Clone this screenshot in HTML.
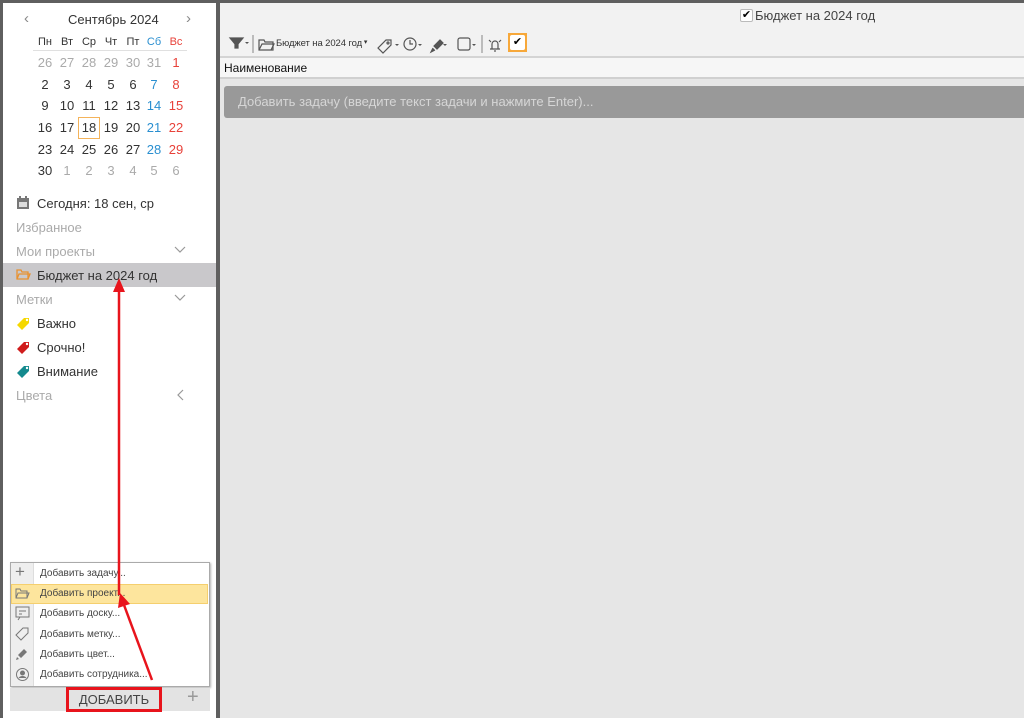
<!DOCTYPE html>
<html><head><meta charset="utf-8"><style>
*{margin:0;padding:0;box-sizing:border-box}
body{width:1024px;height:718px;background:#5f5f5f;font-family:"Liberation Sans","Noto Sans CJK SC",sans-serif;position:relative;overflow:hidden;color:#333}
.abs{position:absolute}
#left{left:3px;top:3px;width:213px;height:715px;background:#fff}
#right{left:220px;top:3px;width:804px;height:715px;background:#e6e6e6}
.cal span{position:absolute;width:22px;text-align:center;font-size:13px;transform:translate(-11px,-8px)}
.g{color:#aaa}.b{color:#2a8fd0}.r{color:#e8423a}
.side{position:absolute;left:16px;font-size:13px}
.muted{color:#aaa}
.mi{position:absolute;left:40px;font-size:10px;color:#444}
</style></head><body>
<div id="left" class="abs"></div>
<div id="right" class="abs"></div>
<div class="abs" style="left:220px;top:3px;width:804px;height:53px;background:#f2f2f2"></div>
<div class="abs" style="left:220px;top:56px;width:804px;height:2px;background:#d4d4d4"></div>
<div class="abs" style="left:220px;top:58px;width:804px;height:19px;background:#f6f6f6"></div>
<div class="abs" style="left:220px;top:77px;width:804px;height:2px;background:#d0d0d0"></div>
<div class="abs" style="left:224px;top:61px;font-size:12px;color:#111">Наименование</div>
<div class="abs" style="left:224px;top:86px;width:800px;height:32px;background:#999;border-radius:3px 0 0 3px"></div>
<div class="abs" style="left:238px;top:94px;font-size:13px;color:#d6d6d6">Добавить задачу (введите текст задачи и нажмите Enter)...</div>
<div class="abs" style="left:740px;top:9px;width:13px;height:13px;border:1px solid #bbb;background:#fff;border-radius:2px;font-size:11px;line-height:11px;text-align:center;color:#000">✔</div>
<div class="abs" style="left:755px;top:8px;font-size:13px;color:#444">Бюджет на 2024 год</div>
<svg class="abs" style="left:228px;top:34px" width="300" height="20" viewBox="0 0 300 20" fill="none" stroke="#555" stroke-width="1.2">
<path d="M2 4h13l-5 6v4h-3v-4z" fill="#555"/><path d="M17 8l2 2 2-2" fill="#555" stroke="none"/>
<line x1="25" y1="1" x2="25" y2="19" stroke="#999"/>
<path d="M31 6h5l1 2h8v8H31z"/><path d="M31 16l3-6h12l-3 6"/>
<path d="M150 14l8-8h5v5l-8 8z"/><circle cx="160" cy="9" r="1"/>
<circle cx="182" cy="10" r="6"/><path d="M182 6v4h3"/>
<path d="M206 12l6-6 3 3-6 6zM205 14l-2 4 4-2" fill="#555"/>
<rect x="230" y="4" width="12" height="12" rx="2"/>
<line x1="254" y1="1" x2="254" y2="19" stroke="#999"/>
<path d="M262 15h10M264 15v-5a3 3 0 0 1 6 0v5M267 16v2M261 6l2 2M273 6l-2 2"/>
<path d="M167 10l2 2 2-2M190 10l2 2 2-2M215 10l2 2 2-2M244 10l2 2 2-2" fill="#555" stroke="none"/>
</svg>
<div class="abs" style="left:276px;top:38px;font-size:9.5px;color:#333;white-space:nowrap;letter-spacing:-0.1px">Бюджет на 2024 год<span style="font-size:7px;vertical-align:2px"> ▾</span></div>
<div class="abs" style="left:508px;top:33px;width:19px;height:19px;background:#f7a83a;padding:2px"><div style="background:#fff;width:15px;height:15px;border-radius:2px;font-size:11px;text-align:center;line-height:15px;color:#000">✔</div></div>
<div class="abs" style="left:24px;top:10px;font-size:15px;color:#888">‹</div>
<div class="abs" style="left:186px;top:10px;font-size:15px;color:#888">›</div>
<div class="abs" style="left:68px;top:12px;font-size:13px;color:#333">Сентябрь 2024</div>
<div class="abs" style="left:33px;top:50px;width:154px;height:1px;background:#e0e0e0"></div>
<div class="cal abs" style="left:0;top:0;font-size:11px">
<span style="left:45px;top:44px;font-size:11px">Пн</span><span style="left:67px;top:44px;font-size:11px">Вт</span><span style="left:89px;top:44px;font-size:11px">Ср</span><span style="left:111px;top:44px;font-size:11px">Чт</span><span style="left:133px;top:44px;font-size:11px">Пт</span><span class="b" style="left:154px;top:44px;font-size:11px">Сб</span><span class="r" style="left:176px;top:44px;font-size:11px">Вс</span>
<span class="g" style="left:45px;top:63px">26</span><span class="g" style="left:67px;top:63px">27</span><span class="g" style="left:89px;top:63px">28</span><span class="g" style="left:111px;top:63px">29</span><span class="g" style="left:133px;top:63px">30</span><span class="g" style="left:154px;top:63px">31</span><span class="r" style="left:176px;top:63px">1</span>
<span style="left:45px;top:85px">2</span><span style="left:67px;top:85px">3</span><span style="left:89px;top:85px">4</span><span style="left:111px;top:85px">5</span><span style="left:133px;top:85px">6</span><span class="b" style="left:154px;top:85px">7</span><span class="r" style="left:176px;top:85px">8</span>
<span style="left:45px;top:106px">9</span><span style="left:67px;top:106px">10</span><span style="left:89px;top:106px">11</span><span style="left:111px;top:106px">12</span><span style="left:133px;top:106px">13</span><span class="b" style="left:154px;top:106px">14</span><span class="r" style="left:176px;top:106px">15</span>
<span style="left:45px;top:128px">16</span><span style="left:67px;top:128px">17</span><span style="left:89px;border:1px solid #f4b35a;height:22px;line-height:20px;top:117px;transform:translate(-11px,0)">18</span><span style="left:111px;top:128px">19</span><span style="left:133px;top:128px">20</span><span class="b" style="left:154px;top:128px">21</span><span class="r" style="left:176px;top:128px">22</span>
<span style="left:45px;top:150px">23</span><span style="left:67px;top:150px">24</span><span style="left:89px;top:150px">25</span><span style="left:111px;top:150px">26</span><span style="left:133px;top:150px">27</span><span class="b" style="left:154px;top:150px">28</span><span class="r" style="left:176px;top:150px">29</span>
<span style="left:45px;top:171px">30</span><span class="g" style="left:67px;top:171px">1</span><span class="g" style="left:89px;top:171px">2</span><span class="g" style="left:111px;top:171px">3</span><span class="g" style="left:133px;top:171px">4</span><span class="g" style="left:154px;top:171px">5</span><span class="g" style="left:176px;top:171px">6</span>
</div>
<svg class="abs" style="left:16px;top:196px" width="14" height="14"><rect x="1" y="2" width="12" height="11" fill="#777"/><rect x="3" y="6" width="8" height="5" fill="#ddd"/><rect x="3" y="0" width="2" height="3" fill="#777"/><rect x="9" y="0" width="2" height="3" fill="#777"/></svg>
<div class="side" style="left:37px;top:196px">Сегодня: 18 сен, ср</div>
<div class="side muted" style="top:220px">Избранное</div>
<div class="side muted" style="top:244px">Мои проекты</div>
<svg class="abs" style="left:174px;top:246px" width="12" height="8" fill="none" stroke="#999" stroke-width="1.2"><path d="M1 1l5 5 5-5"/></svg>
<div class="abs" style="left:3px;top:263px;width:213px;height:24px;background:#c9c8cb"></div>
<svg class="abs" style="left:16px;top:268px" width="15" height="13" fill="none" stroke="#e8912f" stroke-width="1.3"><path d="M1 2h4l1 2h6v7H1z"/><path d="M1 11l2-5h11l-2 5"/></svg>
<div class="side" style="left:37px;top:268px">Бюджет на 2024 год</div>
<div class="side muted" style="top:292px">Метки</div>
<svg class="abs" style="left:174px;top:294px" width="12" height="8" fill="none" stroke="#999" stroke-width="1.2"><path d="M1 1l5 5 5-5"/></svg>
<svg class="abs" style="left:16px;top:316px" width="15" height="15"><path d="M1 9l7-7h5v5l-7 7z" fill="#f5d800"/><circle cx="11" cy="4" r="1.2" fill="#fff"/></svg>
<div class="side" style="left:37px;top:316px">Важно</div>
<svg class="abs" style="left:16px;top:340px" width="15" height="15"><path d="M1 9l7-7h5v5l-7 7z" fill="#d01c1c"/><circle cx="11" cy="4" r="1.2" fill="#fff"/></svg>
<div class="side" style="left:37px;top:340px">Срочно!</div>
<svg class="abs" style="left:16px;top:364px" width="15" height="15"><path d="M1 9l7-7h5v5l-7 7z" fill="#148a8e"/><circle cx="11" cy="4" r="1.2" fill="#fff"/></svg>
<div class="side" style="left:37px;top:364px">Внимание</div>
<div class="side muted" style="top:388px">Цвета</div>
<svg class="abs" style="left:177px;top:389px" width="8" height="12" fill="none" stroke="#999" stroke-width="1.2"><path d="M6 1L1 6l5 5"/></svg>
<div class="abs" style="left:10px;top:562px;width:200px;height:125px;background:#fff;border:1px solid #aaa;box-shadow:1px 1px 2px rgba(0,0,0,.3)"></div>
<div class="abs" style="left:11px;top:563px;width:23px;height:123px;background:#eee;border-right:1px solid #ddd"></div>
<div class="abs" style="left:11px;top:584px;width:197px;height:20px;background:#fde59d;border:1px solid #f5cf6e"></div>
<div class="abs" style="left:15px;top:562px;font-size:17px;color:#777">+</div>
<svg class="abs" style="left:15px;top:587px" width="15" height="13" fill="none" stroke="#777"><path d="M1 2h4l1 2h6v7H1z"/><path d="M1 11l2-5h11l-2 5"/></svg>
<svg class="abs" style="left:15px;top:606px" width="15" height="15" fill="none" stroke="#777"><rect x="1" y="1" width="13" height="10"/><path d="M4 5h7M4 8h3M5 11l-2 3"/></svg>
<svg class="abs" style="left:15px;top:626px" width="15" height="15" fill="none" stroke="#777"><path d="M1 9l7-7h5v5l-7 7z"/></svg>
<svg class="abs" style="left:15px;top:646px" width="15" height="15" fill="#777"><path d="M3 9l6-6 3 3-6 6zM2 11l-1 3 3-1z"/></svg>
<svg class="abs" style="left:15px;top:667px" width="15" height="15" fill="none" stroke="#777"><circle cx="7.5" cy="7.5" r="6"/><circle cx="7.5" cy="6" r="2" fill="#777"/><path d="M4 11a4 3 0 0 1 7 0" fill="#777"/></svg>
<div class="mi" style="top:568px">Добавить задачу...</div>
<div class="mi" style="top:588px">Добавить проект...</div>
<div class="mi" style="top:608px">Добавить доску...</div>
<div class="mi" style="top:629px">Добавить метку...</div>
<div class="mi" style="top:649px">Добавить цвет...</div>
<div class="mi" style="top:669px">Добавить сотрудника...</div>
<div class="abs" style="left:10px;top:688px;width:200px;height:23px;background:#e3e3e3"></div>
<div class="abs" style="left:187px;top:686px;font-size:20px;color:#999">+</div>
<div class="abs" style="left:66px;top:687px;width:96px;height:25px;border:3px solid #e8141c;font-size:13px;color:#444;text-align:center;line-height:19px">ДОБАВИТЬ</div>
<svg class="abs" style="left:0;top:0" width="220" height="718"><g stroke="#e8141c" stroke-width="2.5" fill="#e8141c"><line x1="119" y1="595" x2="119" y2="290"/><path d="M113 292l6-14 6 14z" stroke="none"/><line x1="152" y1="680" x2="124" y2="605"/><path d="M118 608l2-15 10 11z" stroke="none"/></g></svg>
</body></html>
